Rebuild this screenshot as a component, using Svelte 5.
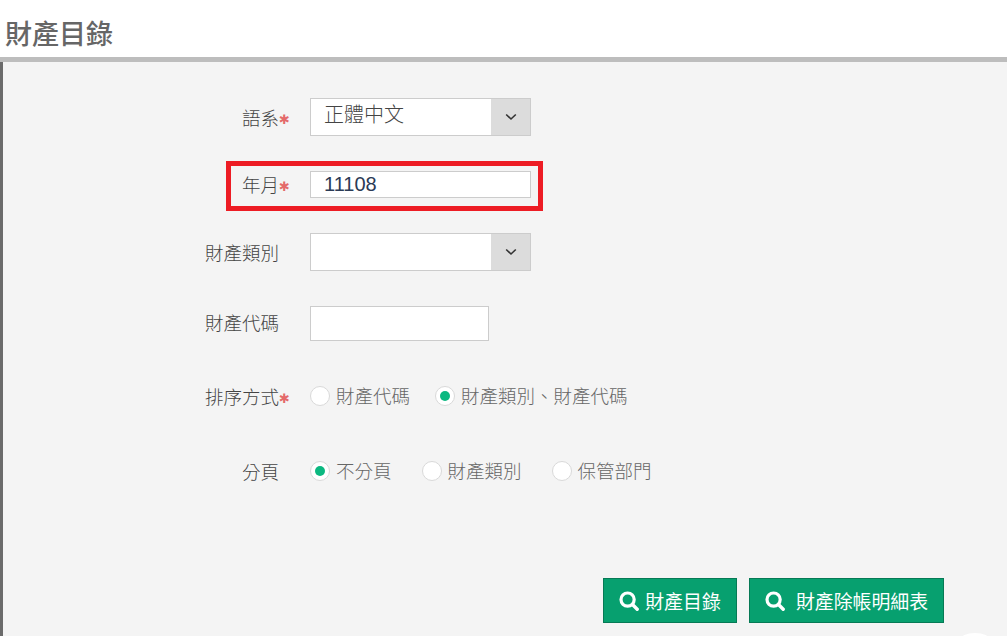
<script>
  let lang = $state('正體中文');
  let period = $state('11108');
  let code = $state('');
  let sortBy = $state('category');
  let paging = $state('none');

  const sortOptions = [
    { value: 'code', label: '財產代碼' },
    { value: 'category', label: '財產類別、財產代碼' }
  ];
  const pagingOptions = [
    { value: 'none', label: '不分頁' },
    { value: 'category', label: '財產類別' },
    { value: 'dept', label: '保管部門' }
  ];
</script>

{#snippet searchIcon()}
  <svg class="search" viewBox="0 0 20 20" aria-hidden="true">
    <circle cx="8.6" cy="8.6" r="6.6" fill="none" stroke="currentColor" stroke-width="3.2" />
    <path d="M13.5 13.5 L18.2 18.2" fill="none" stroke="currentColor" stroke-width="3.4" stroke-linecap="round" />
  </svg>
{/snippet}

{#snippet chevron()}
  <span class="arrow">
    <svg viewBox="0 0 12 8" aria-hidden="true">
      <path d="M1.2 1.5 L6 6 L10.8 1.5" fill="none" stroke="#333" stroke-width="1.6" />
    </svg>
  </span>
{/snippet}

<div class="page">
  <header class="title"><h1>財產目錄</h1></header>

  <main class="content">
    <form class="form" onsubmit={(e) => e.preventDefault()}>
      <div class="row lang">
        <div class="label">語系<i class="req">✱</i></div>
        <div class="select"><span class="value">{lang}</span>{@render chevron()}</div>
      </div>

      <div class="row period">
        <div class="label">年月<i class="req">✱</i></div>
        <input class="text wide" bind:value={period} />
      </div>

      <div class="row category">
        <div class="label">財產類別<i class="req blank">✱</i></div>
        <div class="select"><span class="value"></span>{@render chevron()}</div>
      </div>

      <div class="row code">
        <div class="label">財產代碼<i class="req blank">✱</i></div>
        <input class="text narrow" bind:value={code} />
      </div>

      <div class="row sort">
        <div class="label">排序方式<i class="req">✱</i></div>
        <div class="radios">
          {#each sortOptions as opt}
            <button type="button" class="radio" onclick={() => (sortBy = opt.value)}>
              <span class="dot" class:on={sortBy === opt.value}></span><span class="opt">{opt.label}</span>
            </button>
          {/each}
        </div>
      </div>

      <div class="row paging">
        <div class="label">分頁<i class="req blank">✱</i></div>
        <div class="radios loose">
          {#each pagingOptions as opt}
            <button type="button" class="radio" onclick={() => (paging = opt.value)}>
              <span class="dot" class:on={paging === opt.value}></span><span class="opt">{opt.label}</span>
            </button>
          {/each}
        </div>
      </div>
    </form>

    <div class="actions">
      <button class="btn first">{@render searchIcon()}財產目錄</button>
      <button class="btn second">{@render searchIcon()}財產除帳明細表</button>
    </div>
  </main>
  <div class="corner"></div>
</div>

<style>
  :global(body) {
    margin: 0;
    overflow: hidden;
  }

  .page {
    position: relative;
    height: 636px;
    overflow: hidden;
    display: flex;
    flex-direction: column;
    background: #fff;
    font-family: "Noto Sans CJK TC", "Liberation Sans", sans-serif;
    font-weight: 300;
    color: #444;
  }

  .title {
    box-sizing: content-box;
    height: 57px;
    border-bottom: 5px solid #bdbdbd;
    display: flex;
    align-items: center;
    flex: none;
  }

  h1 {
    margin: 8px 0 0 5px;
    font-size: 27px;
    font-weight: 500;
    line-height: 1;
    color: #666;
  }

  .content {
    flex: 1;
    background: #f4f4f4;
    border-left: 3px solid #6b6b6b;
    padding-top: 36px;
  }

  .row {
    position: relative;
    display: flex;
    align-items: center;
    width: 528px;
  }

  .lang { height: 38px; margin-bottom: 35px; }
  .period { height: 27px; margin-bottom: 35px; }
  .category { height: 38px; margin-bottom: 35px; }
  .code { height: 35px; margin-bottom: 42px; }
  .sort { height: 26px; margin-bottom: 49px; }
  .paging { height: 26px; margin-bottom: 94px; }

  .period .label { margin-top: -2px; }
  .code .label { margin-top: -4px; }

  .period::after {
    content: "";
    position: absolute;
    left: 223px;
    right: -12px;
    top: -10px;
    bottom: -13px;
    border: 5px solid #ed1c24;
    pointer-events: none;
  }

  .label {
    width: 287px;
    height: 26px;
    margin-right: 20px;
    flex: none;
    text-align: right;
    font-size: 18.5px;
    line-height: 26px;
    color: #444;
    white-space: nowrap;
  }

  .req {
    display: inline-block;
    width: 11px;
    height: 14px;
    line-height: 14px;
    font-style: normal;
    font-size: 13px;
    font-weight: 700;
    color: #e46a6a;
    text-align: center;
    vertical-align: 1px;
    font-family: "DejaVu Sans", sans-serif;
  }

  .req.blank {
    visibility: hidden;
  }

  .select {
    box-sizing: border-box;
    width: 221px;
    height: 38px;
    display: flex;
    background: #fff;
    border: 1px solid #ccc;
  }

  .value {
    flex: 1;
    padding-left: 13px;
    font-size: 20px;
    line-height: 30px;
    color: #444;
  }

  .arrow {
    width: 39px;
    flex: none;
    background: #dcdcdc;
    display: flex;
    align-items: center;
    justify-content: center;
  }

  .arrow svg {
    width: 12px;
    height: 8px;
  }

  .text {
    box-sizing: border-box;
    padding: 0 0 0 13px;
    background: #fff;
    border: 1px solid #ccc;
    border-radius: 0;
    outline: none;
    font-family: "Liberation Sans", sans-serif;
    font-size: 20px;
    color: #2b3a55;
  }

  .wide {
    width: 221px;
    height: 27px;
  }

  .narrow {
    width: 179px;
    height: 35px;
  }

  .radios {
    display: flex;
    gap: 25px;
  }

  .radios.loose {
    gap: 30px;
  }

  .radio {
    display: flex;
    align-items: center;
    gap: 6px;
    padding: 0;
    border: 0;
    background: none;
    font: inherit;
    font-size: 18.5px;
    line-height: 26px;
    color: #666;
    white-space: nowrap;
    cursor: pointer;
  }

  .opt {
    height: 26px;
    margin-top: -3px;
  }

  .dot {
    box-sizing: border-box;
    width: 20px;
    height: 20px;
    border-radius: 50%;
    background: #fff;
    border: 1px solid #d9d9d9;
    display: flex;
    align-items: center;
    justify-content: center;
  }

  .dot.on::before {
    content: "";
    width: 10px;
    height: 10px;
    border-radius: 50%;
    background: #0bb880;
  }

  .actions {
    display: flex;
    justify-content: flex-end;
    gap: 12px;
    padding-right: 63px;
  }

  .btn {
    box-sizing: border-box;
    height: 45px;
    display: flex;
    align-items: center;
    justify-content: center;
    background: #07a06f;
    border: 1px solid #067a55;
    color: #fff;
    font: inherit;
    font-weight: 400;
    font-size: 18.9px;
    cursor: pointer;
  }

  .first { width: 134px; gap: 6px; }
  .second { width: 195px; gap: 11px; }

  .search {
    width: 20px;
    height: 20px;
  }

  .corner {
    position: absolute;
    left: 960px;
    top: 633px;
    width: 30px;
    height: 14px;
    border-radius: 50%;
    background: #fff;
  }
</style>
